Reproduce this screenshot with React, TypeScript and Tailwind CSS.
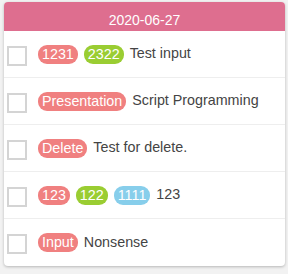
import React from "react";

type Tag = { label: string; color: string };
type Todo = { tags: Tag[]; text: string };

const red = "bg-[#f08080]";
const green = "bg-[#9acd32]";
const blue = "bg-[#87ceeb]";

const todos: Todo[] = [
  { tags: [{ label: "1231", color: red }, { label: "2322", color: green }], text: "Test input" },
  { tags: [{ label: "Presentation", color: red }], text: "Script Programming" },
  { tags: [{ label: "Delete", color: red }], text: "Test for delete." },
  {
    tags: [
      { label: "123", color: red },
      { label: "122", color: green },
      { label: "1111", color: blue },
    ],
    text: "123",
  },
  { tags: [{ label: "Input", color: red }], text: "Nonsense" },
];

export default function App() {
  return (
    <div className="w-[288px] h-[274px] bg-[#f2f2f2] pt-[2px] px-[4px] font-['Liberation_Sans',Arial,sans-serif]">
      <div className="w-[281px] bg-white rounded-[4px] shadow-[0_1px_3px_rgba(0,0,0,0.25)] overflow-hidden">
        <div className="h-[29px] bg-[#de6e8f] text-white text-[14px] leading-[18px] text-center pt-[9px]">
          2020-06-27
        </div>
        {todos.map((todo, i) => (
          <div
            key={i}
            className={
              "h-[47px] flex items-center pl-[3px] text-[14.3px] text-[#444] " +
              (i < todos.length - 1 ? "border-b border-[#eeeeee]" : "")
            }
          >
            <span className="w-[20px] h-[20px] border-2 border-[#d4d4d4] mt-[3px] shrink-0" />
            <div className="flex items-center gap-[6px] ml-[11px]">
              {todo.tags.map((t) => (
                <span key={t.label} className={`${t.color} text-white rounded-[9px] px-[4px] h-[19px] leading-[19px]`}>
                  {t.label}
                </span>
              ))}
              <span>{todo.text}</span>
            </div>
          </div>
        ))}
      </div>
    </div>
  );
}
